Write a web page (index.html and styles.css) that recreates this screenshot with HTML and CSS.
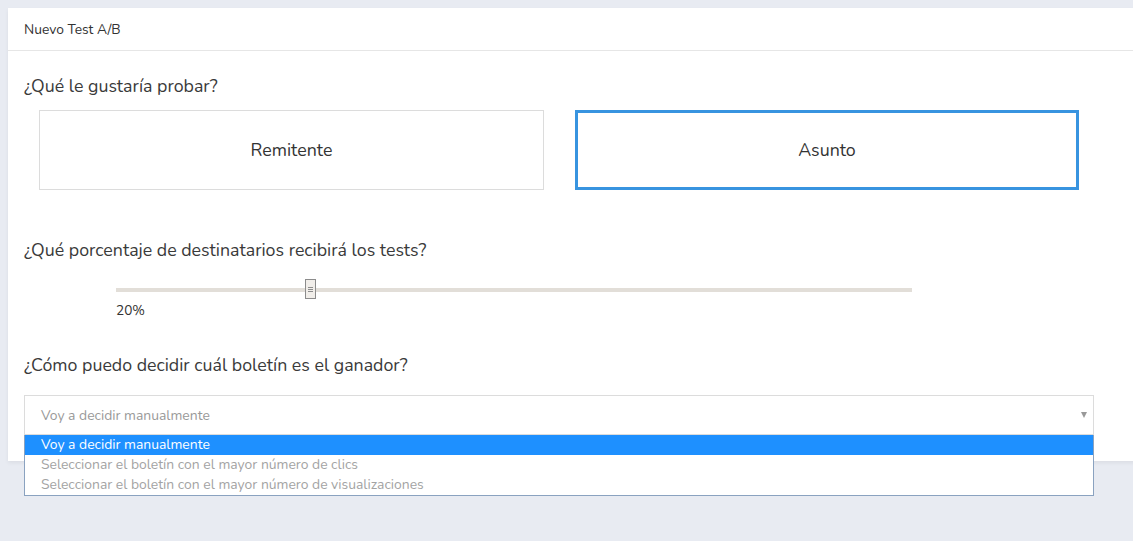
FILE: index.html
```html
<!DOCTYPE html>
<html>
<head>
    <title>Nuevo Test A/B</title>
    <link rel="stylesheet" href="styles.css">
</head>
<body>
    <div class="panel">
        <div class="panel-header">Nuevo Test A/B</div>
        <div class="panel-body">
            <div class="question q-first">¿Qué le gustaría probar?</div>
            <div class="choices">
                <div class="choice">Remitente</div>
                <div class="choice selected">Asunto</div>
            </div>

            <div class="question q-second">¿Qué porcentaje de destinatarios recibirá los tests?</div>
            <div class="slider">
                <div class="slider-track">
                    <div class="slider-handle"><span></span><span></span><span></span></div>
                </div>
                <div class="slider-value">20%</div>
            </div>

            <div class="question q-third">¿Cómo puedo decidir cuál boletín es el ganador?</div>
            <div class="select-wrap">
                <div class="select">
                    <span>Voy a decidir manualmente</span>
                    <span class="arrow"></span>
                </div>
                <ul class="dropdown">
                    <li class="active">Voy a decidir manualmente</li>
                    <li>Seleccionar el boletín con el mayor número de clics</li>
                    <li>Seleccionar el boletín con el mayor número de visualizaciones</li>
                </ul>
            </div>
        </div>
    </div>
</body>
</html>
```
FILE: styles.css
```css
html, body {
    height: 100%;
}

body {
    margin: 0;
    padding: 8px 0 0 8px;
    box-sizing: border-box;
    background: #e8ebf2;
    overflow: hidden;
    font-family: "Nunito", "Lato", "Noto Sans", sans-serif;
    color: #333;
}

.panel {
    background: #fff;
    width: 1160px;
    height: 453px;
    box-shadow: 0 2px 4px rgba(0, 0, 0, 0.06);
}

.panel-header {
    height: 42px;
    line-height: 44px;
    padding: 0 16px;
    font-size: 13.8px;
    color: #333;
    border-bottom: 1px solid #e6e6e6;
}

.panel-body {
    width: 1070px;
    padding: 0 16px;
}

.question {
    font-size: 17.8px;
    line-height: 24px;
    color: #3a3a3a;
}

.q-first {
    margin-top: 23px;
}

.q-second {
    margin-top: 48px;
}

.q-third {
    margin-top: 33px;
}

.choices {
    display: flex;
    gap: 31px;
    padding: 0 15px;
    margin-top: 12px;
}

.choice {
    width: 505px;
    height: 80px;
    box-sizing: border-box;
    border: 1px solid #dcdcdc;
    display: flex;
    align-items: center;
    justify-content: center;
    font-size: 17.8px;
    color: #333;
}

.choice.selected {
    width: 504px;
    border: 3px solid #3894e0;
}

.slider {
    margin-left: 92px;
    width: 796px;
    padding-top: 18px;
}

.slider-track {
    position: relative;
    height: 4px;
    margin-top: 8px;
    background: #e2ded8;
}

.slider-handle {
    position: absolute;
    left: 189px;
    top: -9px;
    width: 9px;
    height: 18px;
    border: 1px solid #8c8c8c;
    background: #f1eeea;
    display: flex;
    flex-direction: column;
    align-items: center;
    justify-content: center;
    gap: 1px;
}

.slider-handle span {
    display: block;
    width: 5px;
    height: 1px;
    background: #8c8c8c;
}

.slider-value {
    margin-top: 10px;
    font-size: 13.6px;
    line-height: 18px;
    color: #333;
}

.select-wrap {
    position: relative;
    margin-top: 18px;
}

.select {
    height: 40px;
    box-sizing: border-box;
    border: 1px solid #dcdcdc;
    display: flex;
    align-items: center;
    justify-content: space-between;
    padding: 0 6px 0 16px;
    font-size: 13.9px;
    color: #999;
}

.arrow {
    width: 0;
    height: 0;
    border-left: 3px solid transparent;
    border-right: 3px solid transparent;
    border-top: 6px solid #999;
}

.dropdown {
    position: absolute;
    left: 0;
    right: 0;
    top: 40px;
    margin: 0;
    padding: 0;
    list-style: none;
    background: #fff;
    border: 1px solid #8aa2c0;
    border-top: none;
}

.dropdown li {
    height: 20px;
    line-height: 20px;
    padding-left: 16px;
    font-size: 13.9px;
    color: #a3a3a3;
}

.dropdown li.active {
    background: #1e90ff;
    color: #fff;
}
```
